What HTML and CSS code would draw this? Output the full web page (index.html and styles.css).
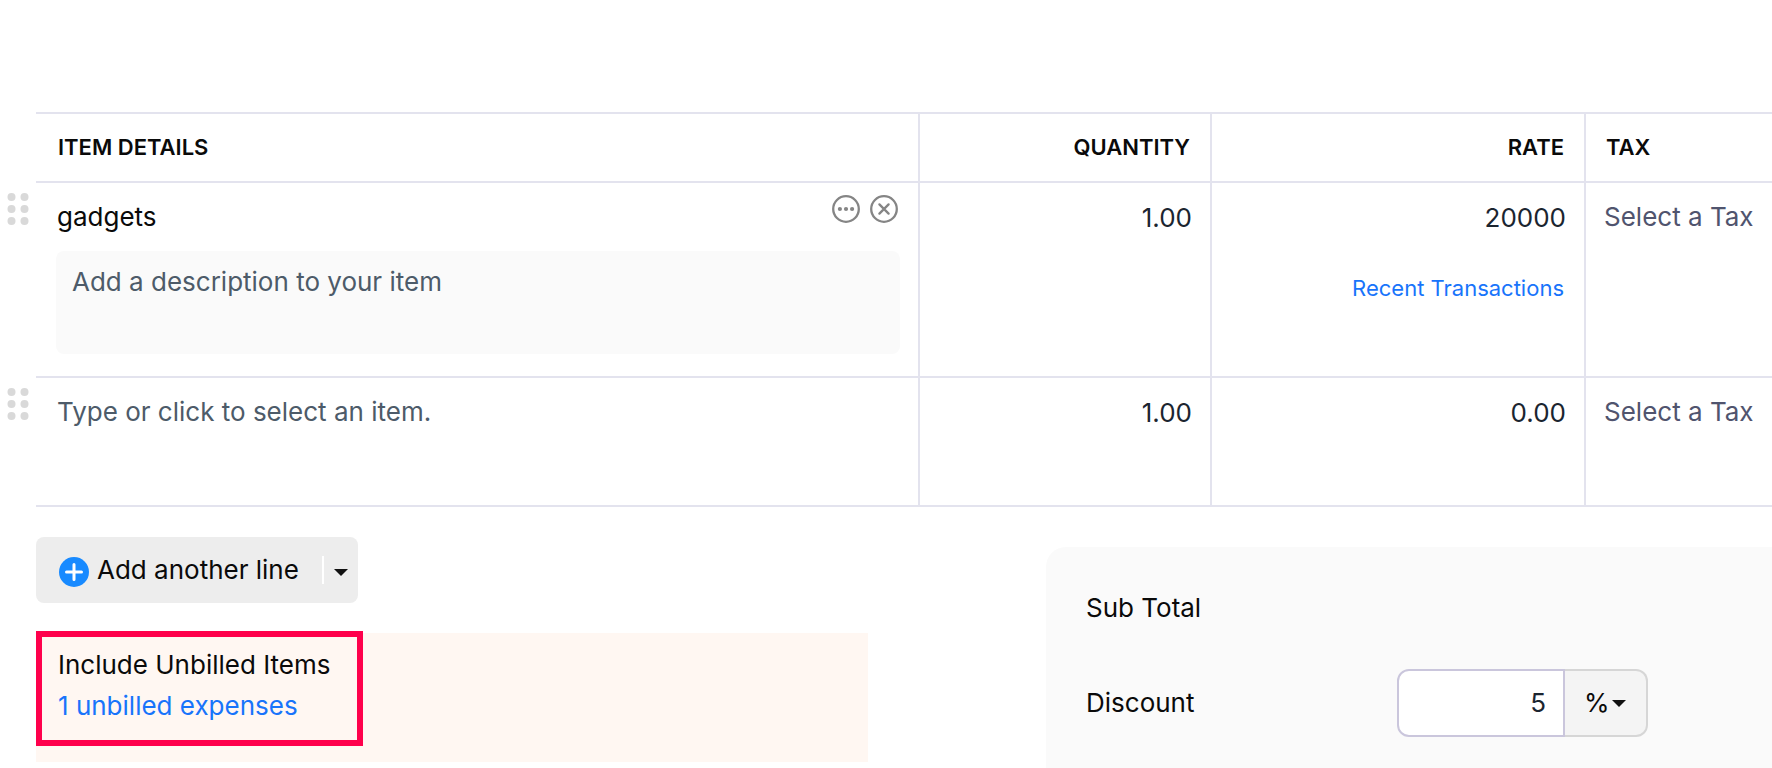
FILE: index.html
```html
<!DOCTYPE html>
<html lang="en">
<head>
    <meta charset="UTF-8">
    <meta name="viewport" content="width=device-width, initial-scale=1.0">
    <title>Item Details</title>
    <link rel="stylesheet" href="styles.css">
</head>
<body>
    <form class="invoice-form">
        <!-- Line items -->
        <table class="items-table">
            <colgroup>
                <col class="col-handle">
                <col class="col-item">
                <col class="col-quantity">
                <col class="col-rate">
                <col class="col-tax">
            </colgroup>
            <thead>
                <tr>
                    <td class="handle-cell"></td>
                    <th scope="col">ITEM DETAILS</th>
                    <th scope="col" class="number">QUANTITY</th>
                    <th scope="col" class="number">RATE</th>
                    <th scope="col">TAX</th>
                </tr>
            </thead>
            <tbody>
                <tr class="item-row">
                    <td class="handle-cell">
                        <button type="button" class="icon-button handle" aria-label="Move row">
                            <svg width="22" height="34" viewBox="0 0 22 34" fill="#d9d9d9">
                                <circle cx="4.5" cy="5" r="4"/><circle cx="17.5" cy="5" r="4"/>
                                <circle cx="4.5" cy="17" r="4"/><circle cx="17.5" cy="17" r="4"/>
                                <circle cx="4.5" cy="29" r="4"/><circle cx="17.5" cy="29" r="4"/>
                            </svg>
                        </button>
                    </td>
                    <td>
                        <div class="item-head">
                            <input type="text" class="field item-name" name="item1" value="gadgets" aria-label="Item">
                            <div class="item-actions">
                                <button type="button" class="icon-button" aria-label="More actions">
                                    <svg width="28" height="28" viewBox="0 0 28 28" fill="#858585">
                                        <circle cx="14" cy="14" r="12.8" fill="none" stroke="#858585" stroke-width="2.3"/>
                                        <circle cx="7.9" cy="14" r="2.1"/><circle cx="14" cy="14" r="2.1"/><circle cx="20.1" cy="14" r="2.1"/>
                                    </svg>
                                </button>
                                <button type="button" class="icon-button" aria-label="Remove item">
                                    <svg width="28" height="28" viewBox="0 0 28 28" fill="none" stroke="#858585" stroke-linecap="round">
                                        <circle cx="14" cy="14" r="12.8" stroke-width="2.3"/>
                                        <path d="M9.4 9.4l9.2 9.2M18.6 9.4l-9.2 9.2" stroke-width="2.3"/>
                                    </svg>
                                </button>
                            </div>
                        </div>
                        <textarea class="description" name="description1" placeholder="Add a description to your item" aria-label="Description"></textarea>
                    </td>
                    <td class="number"><input type="text" class="field" name="quantity1" value="1.00" aria-label="Quantity"></td>
                    <td class="number">
                        <input type="text" class="field" name="rate1" value="20000" aria-label="Rate">
                        <a href="#" class="link recent-link">Recent Transactions</a>
                    </td>
                    <td>
                        <select class="field tax-select" name="tax1" aria-label="Tax">
                            <option>Select a Tax</option>
                        </select>
                    </td>
                </tr>
                <tr class="empty-row">
                    <td class="handle-cell">
                        <button type="button" class="icon-button handle" aria-label="Move row">
                            <svg width="22" height="34" viewBox="0 0 22 34" fill="#d9d9d9">
                                <circle cx="4.5" cy="5" r="4"/><circle cx="17.5" cy="5" r="4"/>
                                <circle cx="4.5" cy="17" r="4"/><circle cx="17.5" cy="17" r="4"/>
                                <circle cx="4.5" cy="29" r="4"/><circle cx="17.5" cy="29" r="4"/>
                            </svg>
                        </button>
                    </td>
                    <td><input type="text" class="field item-name" name="item2" placeholder="Type or click to select an item." aria-label="Item"></td>
                    <td class="number"><input type="text" class="field" name="quantity2" value="1.00" aria-label="Quantity"></td>
                    <td class="number"><input type="text" class="field" name="rate2" value="0.00" aria-label="Rate"></td>
                    <td>
                        <select class="field tax-select" name="tax2" aria-label="Tax">
                            <option>Select a Tax</option>
                        </select>
                    </td>
                </tr>
            </tbody>
        </table>

        <div class="form-footer">
            <div class="footer-left">
                <!-- Add line button -->
                <div class="add-line">
                    <button type="button" class="add-line-main">
                        <svg width="30" height="30" viewBox="0 0 30 30">
                            <circle cx="15" cy="15" r="15" fill="#188aff"/>
                            <path d="M15 7.5v15M7.5 15h15" stroke="#fff" stroke-width="3" stroke-linecap="round"/>
                        </svg>
                        <span>Add another line</span>
                    </button>
                    <button type="button" class="add-line-more" aria-label="More options">
                        <svg width="14" height="7" viewBox="0 0 14 7"><path d="M0 0h14L7 7z" fill="#111"/></svg>
                    </button>
                </div>

                <!-- Unbilled items -->
                <div class="unbilled">
                    <div class="unbilled-title">Include Unbilled Items</div>
                    <a href="#" class="link">1 unbilled expenses</a>
                    <div class="highlight"></div>
                </div>
            </div>

            <!-- Totals -->
            <div class="totals">
                <div class="total-row">
                    <span>Sub Total</span>
                </div>
                <div class="total-row">
                    <label for="discount">Discount</label>
                    <div class="discount-group">
                        <input type="text" id="discount" class="discount-input" name="discount" value="5">
                        <div class="discount-type">
                            <select name="discount_type" aria-label="Discount type">
                                <option>%</option>
                            </select>
                            <svg width="14" height="7" viewBox="0 0 14 7"><path d="M0 0h14L7 7z" fill="#111"/></svg>
                        </div>
                    </div>
                </div>
            </div>
        </div>
    </form>
</body>
</html>
```

FILE: styles.css
```css
* {
    box-sizing: border-box;
}
body {
    margin: 0;
    background-color: #fff;
    color: #0a0a0a;
    font-family: Inter, "Liberation Sans", sans-serif;
    font-size: 26px;
    line-height: 32px;
}
input, select, textarea, button {
    font: inherit;
    color: inherit;
    margin: 0;
    padding: 0;
    border: none;
    border-radius: 0;
    background: none;
}
button {
    cursor: pointer;
}
select {
    appearance: none;
}
svg {
    display: block;
}
.link {
    color: #1874fb;
    text-decoration: none;
}
.invoice-form {
    padding-top: 112px;
}

/* Line items */
.items-table {
    width: 100%;
    table-layout: fixed;
    border-collapse: separate;
    border-spacing: 0;
}
.col-handle {
    width: 36px;
}
.col-quantity {
    width: 292px;
}
.col-rate {
    width: 374px;
}
.col-tax {
    width: 186px;
}
.items-table th, .items-table td {
    border-right: 2px solid #e3e3ee;
    border-bottom: 2px solid #e3e3ee;
    padding: 16px 18px 22px 20px;
    text-align: left;
    vertical-align: top;
}
.items-table th {
    border-top: 2px solid #e3e3ee;
    padding: 17px 20px 18px 22px;
    font-size: 22px;
    font-weight: 600;
}
.items-table th:last-child {
    border-right: none;
    padding-left: 20px;
    padding-right: 0;
}
.items-table td:last-child {
    border-right: none;
    padding-left: 18px;
    padding-right: 0;
}
.items-table .number {
    text-align: right;
}
.items-table .handle-cell {
    border: none;
    padding: 9px 0 0 7px;
}
.icon-button {
    display: block;
}
.field {
    display: block;
    width: 100%;
    height: 36px;
    color: #1b2530;
}
.number .field {
    text-align: right;
}
.item-name {
    height: 34px;
    padding-left: 1px;
    color: #0a0a0a;
}
.field::placeholder, .description::placeholder {
    color: #4d5b69;
    opacity: 1;
}
.item-head {
    display: flex;
    gap: 16px;
    margin-bottom: 18px;
}
.item-actions {
    display: flex;
    align-items: flex-start;
    gap: 10px;
    margin-top: -4px;
    padding-right: 2px;
}
.description {
    display: block;
    width: 100%;
    height: 103px;
    padding: 15px 16px;
    border-radius: 8px;
    background-color: #fafafa;
    resize: none;
}
.recent-link {
    display: block;
    margin-top: 37px;
    padding-right: 2px;
    font-size: 22px;
}
.tax-select {
    color: #50546e;
}
.empty-row td {
    height: 129px;
}

/* Below the table */
.form-footer {
    display: flex;
    justify-content: space-between;
    padding-left: 36px;
}
.footer-left {
    flex: 0 1 832px;
    padding-top: 30px;
}
.add-line {
    display: flex;
    align-items: center;
    width: fit-content;
    height: 66px;
    border-radius: 8px;
    background-color: #ededed;
}
.add-line-main {
    display: flex;
    align-items: center;
    gap: 8px;
    padding: 0 23px;
}
.add-line-main svg {
    margin-top: 4px;
}
.add-line-more {
    height: 28px;
    padding: 4px 10px 0;
    border-left: 2px solid #fff;
}
.unbilled {
    position: relative;
    margin-top: 30px;
    height: 129px;
    padding: 11px 22px;
    background-color: #fff7f2;
    line-height: 41px;
}
/* Callout frame around the unbilled link */
.highlight {
    position: absolute;
    top: -2px;
    left: 0;
    width: 327px;
    height: 115px;
    border: 6px solid #ff004c;
    pointer-events: none;
}

/* Totals */
.totals {
    flex: 0 1 726px;
    margin-top: 40px;
    padding: 28px 40px 31px;
    border-top-left-radius: 20px;
    background-color: #fafafa;
}
.total-row {
    display: flex;
    align-items: center;
    height: 66px;
}
.total-row + .total-row {
    margin-top: 28px;
    height: 68px;
}
.total-row label {
    width: 311px;
}
.discount-group {
    display: flex;
    height: 68px;
}
.discount-input {
    width: 168px;
    padding-right: 17px;
    border: 2px solid #cac6dc;
    border-radius: 12px 0 0 12px;
    background-color: #fff;
    color: #1b2530;
    text-align: right;
}
.discount-type {
    display: grid;
    align-items: center;
    width: 83px;
    border: 2px solid #d6d6d6;
    border-left: none;
    border-radius: 0 12px 12px 0;
    background-color: #f4f4f4;
}
.discount-type select, .discount-type svg {
    grid-area: 1 / 1;
}
.discount-type select {
    height: 100%;
    padding-left: 19px;
}
.discount-type svg {
    justify-self: end;
    margin-right: 20px;
    pointer-events: none;
}
```
